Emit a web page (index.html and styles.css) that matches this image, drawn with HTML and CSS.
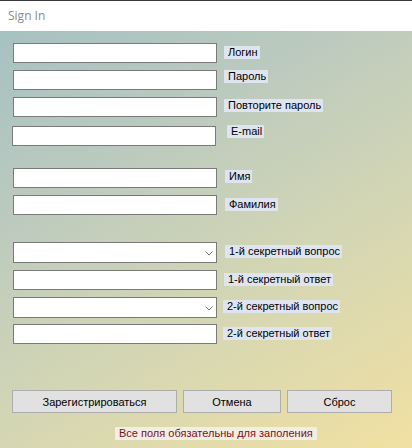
FILE: index.html
```html
<!DOCTYPE html>
<html lang="ru">
<head>
<meta charset="utf-8">
<title>Sign In</title>
<link rel="stylesheet" href="styles.css">
</head>
<body>
<div class="window">
  <div class="titlebar">Sign In</div>
  <div class="form">
    <div class="row r1"><div class="box"></div><span class="lbl l1">Логин</span></div>
    <div class="row r2"><div class="box"></div><span class="lbl l2">Пароль</span></div>
    <div class="row r3"><div class="box"></div><span class="lbl l3">Повторите пароль</span></div>
    <div class="row r4"><div class="box shift"></div><span class="lbl l4">E-mail</span></div>
    <div class="row r5"><div class="box"></div><span class="lbl l5">Имя</span></div>
    <div class="row r6"><div class="box"></div><span class="lbl l6">Фамилия</span></div>
    <div class="row r7"><div class="box combo"><svg class="chev" width="8" height="5" viewBox="0 0 8 5"><polyline points="0.5,0.5 4,4 7.5,0.5" fill="none" stroke="#707070" stroke-width="1"/></svg></div><span class="lbl l7">1-й секретный вопрос</span></div>
    <div class="row r8"><div class="box"></div><span class="lbl l8">1-й секретный ответ</span></div>
    <div class="row r9"><div class="box combo"><svg class="chev" width="8" height="5" viewBox="0 0 8 5"><polyline points="0.5,0.5 4,4 7.5,0.5" fill="none" stroke="#707070" stroke-width="1"/></svg></div><span class="lbl l9">2-й секретный вопрос</span></div>
    <div class="row r10"><div class="box"></div><span class="lbl l10">2-й секретный ответ</span></div>
    <div class="buttons">
      <button class="btn b1">Зарегистрироваться</button>
      <button class="btn b2">Отмена</button>
      <button class="btn b3">Сброс</button>
    </div>
    <div class="note"><span>Все поля обязательны для заполения</span></div>
  </div>
</div>
</body>
</html>
```
FILE: styles.css
```css
html, body {
  margin: 0;
  padding: 0;
}
body {
  width: 412px;
  height: 448px;
  overflow: hidden;
  font-family: "Liberation Sans", Arial, sans-serif;
  font-size: 11px;
  color: #000;
}
.window {
  width: 412px;
  height: 448px;
  display: flex;
  flex-direction: column;
}
.titlebar {
  height: 30px;
  border-top: 1px solid #3a3a3a;
  background: #fff;
  color: #8a8a8a;
  font-family: "Open Sans", "Noto Sans", sans-serif;
  font-size: 12px;
  line-height: 30px;
  padding-left: 8px;
  box-sizing: content-box;
}
.form {
  flex: 1;
  background: linear-gradient(150deg, #a6c1c2 0%, #bccabe 30%, #d3d6b4 60%, #f1e0a2 100%);
  display: flex;
  flex-direction: column;
}
.row {
  display: flex;
  align-items: flex-start;
  padding-left: 13px;
  height: 20px;
}
.box {
  width: 204px;
  height: 20px;
  box-sizing: border-box;
  background: #fff;
  border: 1px solid #7a7a7a;
  flex: none;
  position: relative;
}
.box.shift {
  margin-left: -1px;
}
.combo {
  height: 21px;
}
.chev {
  position: absolute;
  right: 3px;
  top: 8px;
}
.lbl {
  background: #dfe4f1;
  height: 13px;
  line-height: 13px;
  padding: 0 2px 0 4px;
  margin-left: 7px;
  white-space: nowrap;
}
.r1 { margin-top: 12px; }
.r2 { margin-top: 7px; }
.r3 { margin-top: 7px; }
.r4 { margin-top: 9px; }
.r5 { margin-top: 22px; }
.r6 { margin-top: 7px; }
.r7 { margin-top: 27px; height: 21px; }
.r8 { margin-top: 7px; }
.r9 { margin-top: 7px; height: 21px; }
.r10 { margin-top: 6px; }

.l1 { margin-top: 3px; }
.l2 { margin-top: 0; }
.l3 { margin-top: 2px; }
.l4 { margin-top: -1px; margin-left: 11px; }
.l5 { margin-top: 2px; margin-left: 8px; }
.l6 { margin-top: 3px; margin-left: 8px; }
.l7 { margin-top: 3px; margin-left: 8px; }
.l8 { margin-top: 3px; }
.l9 { margin-top: 3px; margin-left: 6px; }
.l10 { margin-top: 3px; margin-left: 6px; }

.buttons {
  display: flex;
  margin-top: 46px;
  padding-left: 12px;
  gap: 6px;
}
.btn {
  height: 23px;
  background: #e1e1e1;
  border: 1px solid #adadad;
  font-family: "Liberation Sans", Arial, sans-serif;
  font-size: 11px;
  color: #000;
  padding: 0;
  margin: 0;
}
.b1 { width: 165px; }
.b2 { width: 98px; }
.b3 { width: 105px; }
.note {
  margin-top: 14px;
  padding-left: 115px;
  display: flex;
}
.note span {
  background: #f3eee4;
  color: #7d0e1a;
  font-size: 11px;
  height: 13px;
  line-height: 13px;
  padding: 0 4px;
  white-space: nowrap;
}
```
